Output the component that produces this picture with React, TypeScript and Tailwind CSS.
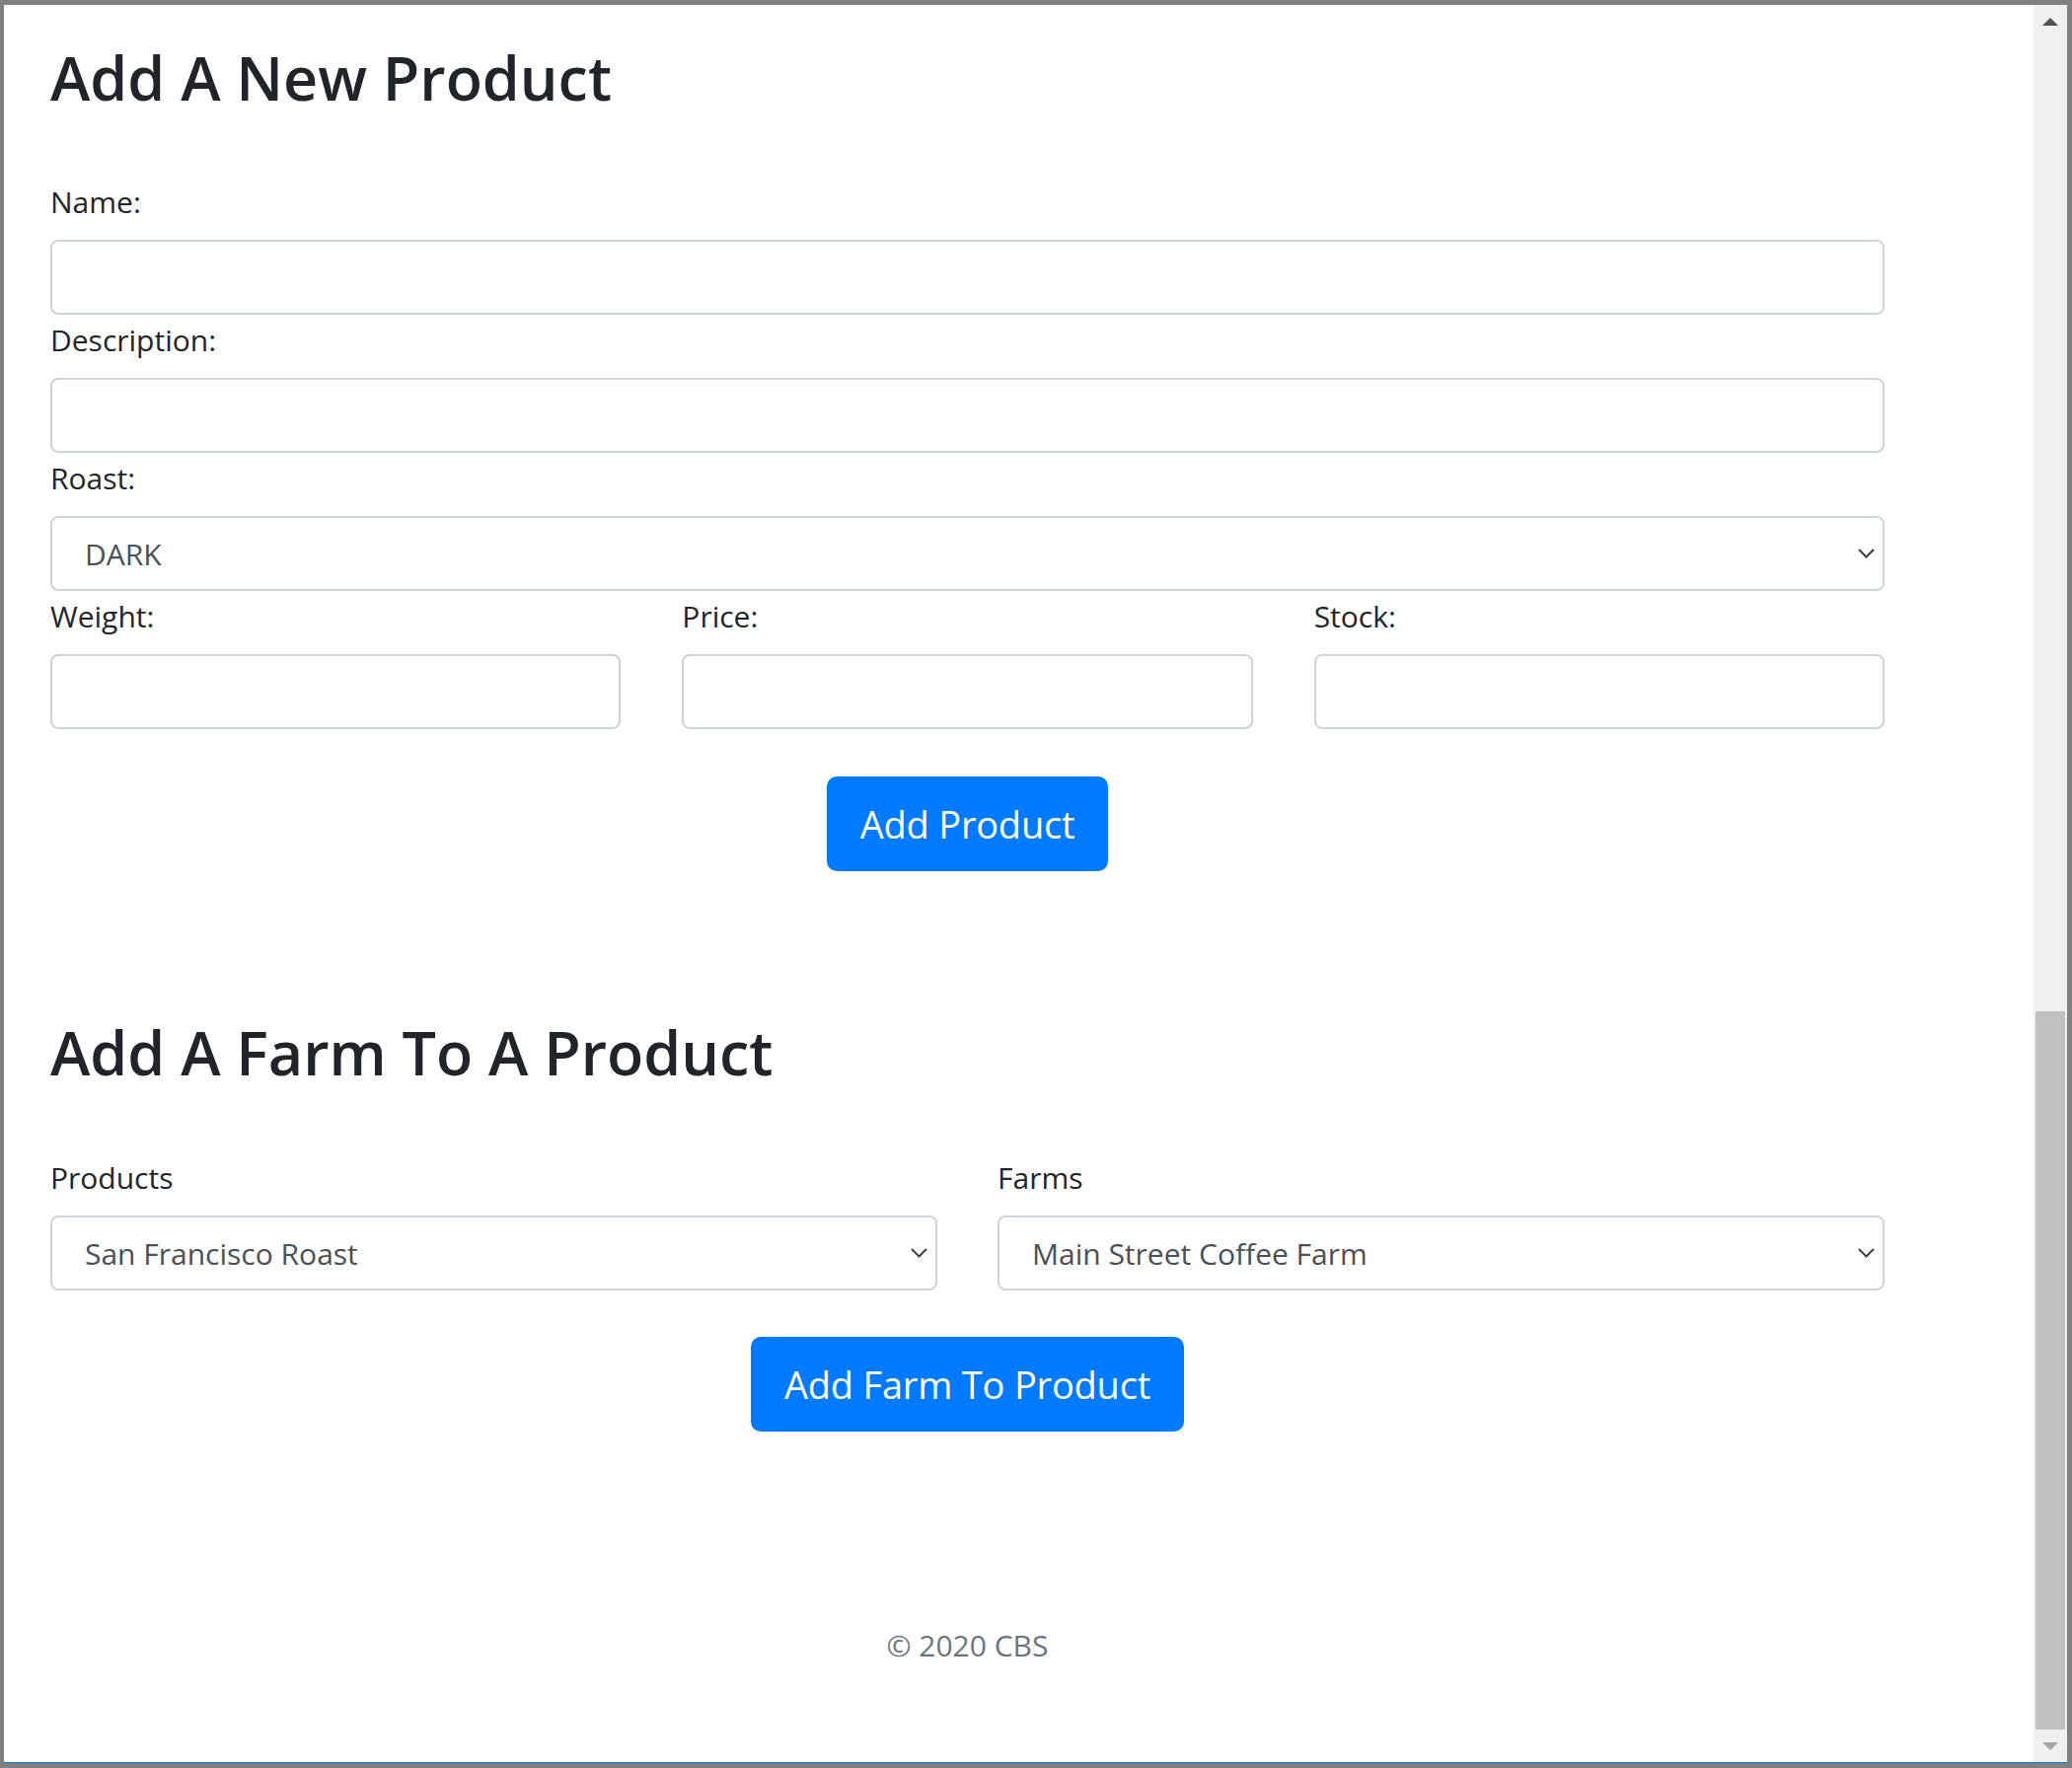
import React from "react";

function Label({ children }: { children: React.ReactNode }) {
  return (
    <div className="text-[30px] leading-[48px] pt-[2px] mb-[14px] text-[#212529] whitespace-nowrap">{children}</div>
  );
}

function TextBox() {
  return (
    <input
      type="text"
      className="block w-full h-[76px] border-2 border-[#ced4da] rounded-[8px] bg-white outline-none px-[24px] text-[30px]"
    />
  );
}

function Chevron() {
  return (
    <svg width="17" height="10" viewBox="0 0 17 10" className="shrink-0">
      <polyline points="1,1 8.5,8.5 16,1" fill="none" stroke="#3a3f44" strokeWidth="2" />
    </svg>
  );
}

function SelectBox({ value }: { value: string }) {
  return (
    <div className="flex items-center justify-between w-full h-[76px] border-2 border-[#ced4da] rounded-[8px] bg-white pl-[33px] pr-[8px]">
      <span className="text-[30px] leading-[48px] pt-[2px] text-[#495057] whitespace-nowrap">{value}</span>
      <Chevron />
    </div>
  );
}

function Field({ label, children }: { label: string; children: React.ReactNode }) {
  return (
    <div>
      <Label>{label}</Label>
      {children}
    </div>
  );
}

function PrimaryButton({ children }: { children: React.ReactNode }) {
  return (
    <div className="flex justify-center">
      <button className="h-[96px] px-[32px] border-2 border-[#007bff] bg-[#007bff] text-white text-[38px] leading-[57px] tracking-[-0.2px] rounded-[10px] whitespace-nowrap">
        {children}
      </button>
    </div>
  );
}

export default function App() {
  return (
    <div className="w-[2100px] h-[1792px] bg-[#808080] pt-[5px] pl-[4px] pr-[5px] pb-[5px] flex flex-col font-['Open_Sans',sans-serif] overflow-hidden">
      <div className="flex flex-1 min-h-0">
        <div className="flex-1 bg-white pl-[47px] pt-[37px]">
          <div className="w-[1859px]">
            <h1 className="text-[61px] leading-[74px] font-semibold text-[#212529] whitespace-nowrap">Add A New Product</h1>
            <div className="mt-[63px]">
              <Field label="Name:">
                <TextBox />
              </Field>
              <Field label="Description:">
                <TextBox />
              </Field>
              <Field label="Roast:">
                <SelectBox value="DARK" />
              </Field>
              <div className="grid grid-cols-3 gap-x-[62px]">
                <Field label="Weight:">
                  <TextBox />
                </Field>
                <Field label="Price:">
                  <TextBox />
                </Field>
                <Field label="Stock:">
                  <TextBox />
                </Field>
              </div>
              <div className="mt-[48px]">
                <PrimaryButton>Add Product</PrimaryButton>
              </div>
            </div>

            <h1 className="mt-[147px] text-[61px] leading-[74px] font-semibold text-[#212529] whitespace-nowrap">Add A Farm To A Product</h1>
            <div className="mt-[64px] grid grid-cols-2 gap-x-[61px]">
              <Field label="Products">
                <SelectBox value="San Francisco Roast" />
              </Field>
              <Field label="Farms">
                <SelectBox value="Main Street Coffee Farm" />
              </Field>
            </div>
            <div className="mt-[47px]">
              <PrimaryButton>Add Farm To Product</PrimaryButton>
            </div>

            <div className="mt-[193px] text-center text-[30px] leading-[48px] text-[#6c757d]">© 2020 CBS</div>
          </div>
        </div>
        <div className="w-[34px] bg-[#f0f0f0] flex flex-col">
          <div className="h-[34px] flex items-center justify-center">
            <svg width="16" height="8" viewBox="0 0 16 8">
              <polygon points="8,0 16,8 0,8" fill="#505050" />
            </svg>
          </div>
          <div className="flex-1" />
          <div className="h-[728px] mx-[2px] bg-[#c1c1c1]" />
          <div className="h-[33px] flex items-center justify-center">
            <svg width="16" height="8" viewBox="0 0 16 8">
              <polygon points="0,0 16,0 8,8" fill="#a3a3a3" />
            </svg>
          </div>
        </div>
      </div>
      <div className="h-px bg-[#0078d7]" />
    </div>
  );
}
